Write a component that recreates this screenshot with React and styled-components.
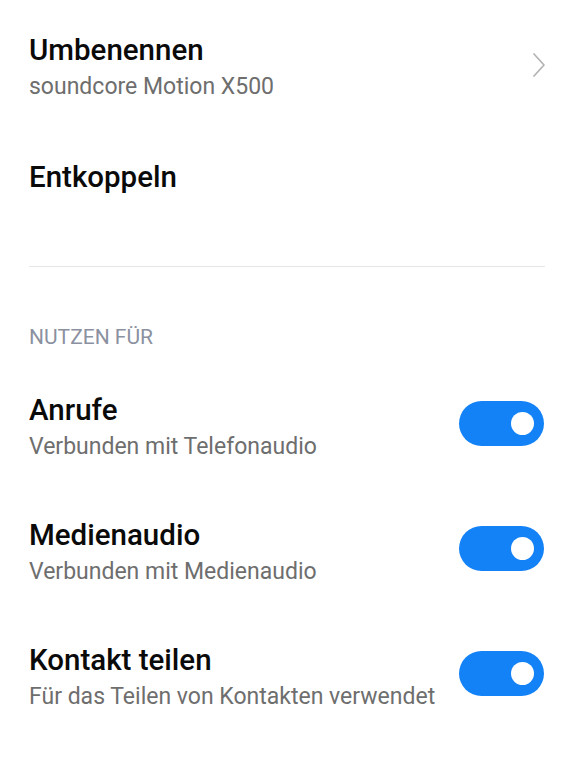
import React from "react";
import styled, { createGlobalStyle } from "styled-components";

const GlobalStyle = createGlobalStyle`
  html, body {
    margin: 0;
    padding: 0;
    background: #fff;
  }
  body {
    font-family: Roboto, "Noto Sans", "Liberation Sans", sans-serif;
    -webkit-font-smoothing: antialiased;
  }
`;

const Page = styled.div`
  width: 568px;
  min-height: 760px;
  box-sizing: border-box;
  padding: 32px 23px 0 29px;
  background: #fff;
`;

const Item = styled.div`
  display: flex;
  align-items: center;
  justify-content: space-between;
  margin-top: ${(p) => p.$gap || 0}px;
`;

const TextBlock = styled.div`
  display: flex;
  flex-direction: column;
`;

const Title = styled.div`
  font-size: 29.5px;
  line-height: 36px;
  font-weight: 500;
  color: #0a0a0a;
`;

const Subtitle = styled.div`
  font-size: 23px;
  line-height: 30px;
  color: #6e6e6e;
  margin-top: ${(p) => p.$gap ?? 4}px;
`;

const Divider = styled.div`
  height: 1px;
  background: #e6e6e6;
  margin-top: 71px;
`;

const SectionHeader = styled.div`
  margin-top: 57px;
  font-size: 21px;
  line-height: 26px;
  color: #8b91a0;
`;

const Chevron = styled.svg`
  width: 14px;
  height: 26px;
  margin-right: -1px;
  margin-top: -5px;
  flex-shrink: 0;
`;

const Toggle = styled.div`
  width: 85px;
  height: 45px;
  border-radius: 23px;
  background: ${(p) => (p.$on ? "#1482f7" : "#d6d6d6")};
  display: flex;
  align-items: center;
  justify-content: ${(p) => (p.$on ? "flex-end" : "flex-start")};
  padding: 0 10px;
  box-sizing: border-box;
  flex-shrink: 0;
  margin-top: -7px;
  margin-right: 1px;
`;

const Knob = styled.div`
  width: 23px;
  height: 23px;
  border-radius: 50%;
  background: #fff;
`;

const toggles = [
  { title: "Anrufe", sub: "Verbunden mit Telefonaudio", gap: 42 },
  { title: "Medienaudio", sub: "Verbunden mit Medienaudio", gap: 55 },
  { title: "Kontakt teilen", sub: "Für das Teilen von Kontakten verwendet", gap: 55 },
];

export default function App() {
  return (
    <>
      <GlobalStyle />
      <Page>
        <Item>
          <TextBlock>
            <Title>Umbenennen</Title>
            <Subtitle>soundcore Motion X500</Subtitle>
          </TextBlock>
          <Chevron viewBox="0 0 14 26" fill="none">
            <path
              d="M2 2 L12 13 L2 24"
              stroke="#b3b3b3"
              strokeWidth="1.7"
              strokeLinecap="round"
              strokeLinejoin="round"
            />
          </Chevron>
        </Item>
        <Item $gap={57}>
          <Title>Entkoppeln</Title>
        </Item>
        <Divider />
        <SectionHeader>NUTZEN FÜR</SectionHeader>
        {toggles.map((t) => (
          <Item key={t.title} $gap={t.gap}>
            <TextBlock>
              <Title>{t.title}</Title>
              <Subtitle>{t.sub}</Subtitle>
            </TextBlock>
            <Toggle $on>
              <Knob />
            </Toggle>
          </Item>
        ))}
      </Page>
    </>
  );
}
